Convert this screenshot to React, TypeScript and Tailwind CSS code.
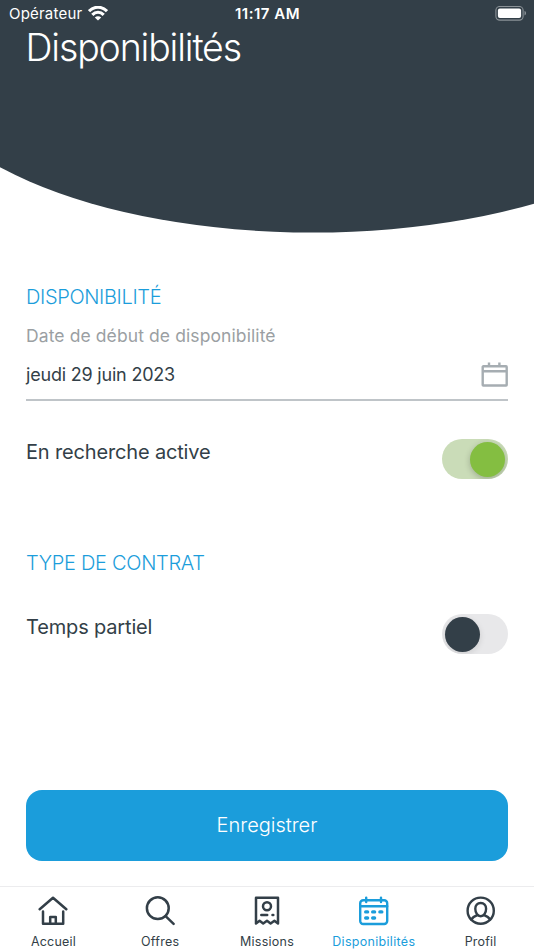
import React from "react";

function Toggle({ on }: { on: boolean }) {
  return (
    <button
      role="switch"
      aria-checked={on}
      className={`flex h-10 w-[66px] items-center overflow-hidden rounded-full px-[3px] ${
        on ? "justify-end bg-[#cadcb8]" : "justify-start bg-[#e8e8ea]"
      }`}
    >
      <span
        className={`block size-[35px] rounded-full ${
          on ? "bg-[#84be41] shadow-[0_2px_6px_rgba(0,0,0,0.22)]" : "bg-[#333f48] shadow-[0_2px_6px_rgba(0,0,0,0.12)]"
        }`}
      />
    </button>
  );
}

function HomeIcon() {
  return (
    <svg width="30" height="30" viewBox="0 0 30 30" fill="none" stroke="currentColor" strokeWidth="2.5" strokeLinecap="round" strokeLinejoin="round">
      <path d="M1.7 13.3 15 1.8l13.3 11.5M5 15.5v12.3h20.2V15.5M12.2 27.8v-6.7h5.6v6.7" />
    </svg>
  );
}

function SearchIcon() {
  return (
    <svg width="30" height="30" viewBox="0 0 30 30" fill="none" stroke="currentColor" strokeWidth="2.5" strokeLinecap="round">
      <circle cx="12.8" cy="12.2" r="10.9" />
      <path d="m20.6 20.2 8 7.6" />
    </svg>
  );
}

function MissionIcon() {
  return (
    <svg width="30" height="30" viewBox="0 0 30 30" fill="none" stroke="currentColor" strokeWidth="2.5" strokeLinecap="round" strokeLinejoin="round">
      <path d="M4 27.4V1.7h22v25.7l-3.6-2.6-3.8 2.7-3.6-2.7-3.8 2.7-3.6-2.7Z" />
      <circle cx="15" cy="10.3" r="4" />
      <path d="M9.3 18.9h5.9M20.5 18.9h.8" />
    </svg>
  );
}

function CalendarIcon() {
  return (
    <svg width="30" height="30" viewBox="0 0 30 30" fill="none" stroke="currentColor" strokeWidth="2.4" strokeLinecap="round" strokeLinejoin="round">
      <rect x="1.2" y="4.2" width="27" height="23.8" rx="3" />
      <path d="M1.2 10.2h27M7.2 1.6v4.4M22 1.6v4.4" />
      <path strokeWidth="3.4" d="M6.7 15.9h1.9M13.7 15.9h1.9M20.9 15.9h1.9M6.7 22h1.9M13.7 22h1.9" />
    </svg>
  );
}

function ProfileIcon() {
  return (
    <svg width="30" height="30" viewBox="0 0 30 30" fill="none" stroke="currentColor" strokeWidth="2.4" strokeLinecap="round" strokeLinejoin="round">
      <circle cx="14.7" cy="14.7" r="13.1" />
      <path d="M14.7 7c-3.3 0-5.4 2.4-5.4 5.8 0 4.2 2.3 7.4 5.4 7.4s5.4-3.2 5.4-7.4c0-3.4-2.1-5.8-5.4-5.8Z" />
      <path d="M5.3 23.6c1.3-2.3 3.3-3.4 6.1-4.4M24.1 23.6c-1.3-2.3-3.3-3.4-6.1-4.4" />
    </svg>
  );
}

const tabs = [
  { label: "Accueil", icon: <HomeIcon />, tracking: "tracking-[0.2px]" },
  { label: "Offres", icon: <SearchIcon />, tracking: "tracking-[0.3px]" },
  { label: "Missions", icon: <MissionIcon />, tracking: "tracking-[0.25px]" },
  { label: "Disponibilités", icon: <CalendarIcon />, active: true, tracking: "tracking-[0.3px]" },
  { label: "Profil", icon: <ProfileIcon />, tracking: "tracking-[0.2px]" },
];

export default function App() {
  return (
    <div className="relative flex h-[950px] w-[534px] flex-col overflow-hidden bg-white font-['Inter',sans-serif] text-[#333f48]">
      <svg className="absolute left-0 top-0" width="534" height="240" viewBox="0 0 534 240">
        <path d="M0 0H534V60H0Z" fill="#333f48" />
        <ellipse cx="313" cy="58" rx="401" ry="174.6" fill="#333f48" />
      </svg>

      <header className="relative h-[278px] text-white">
        <div className="grid h-[27px] grid-cols-3 items-center pl-[9px] pr-[8px]">
          <div className="flex items-center gap-[6px]">
            <span className="text-[15px] leading-[27px] tracking-[0.2px]">Opérateur</span>
            <svg width="20" height="15" viewBox="0 0 20 15" fill="none" stroke="white" strokeWidth="3.1">
              <path d="M1 5.3C6-.1 14-.1 19 5.3M4.3 8.9c3.3-3.5 8.1-3.5 11.4 0" />
              <path d="M10 14.6 6.8 11.4c1.8-1.7 4.6-1.7 6.4 0Z" fill="white" stroke="none" />
            </svg>
          </div>
          <span className="text-center text-[15px] font-semibold leading-[27px] tracking-[0.5px]">11:17 AM</span>
          <svg className="justify-self-end" width="31" height="15" viewBox="0 0 31 15">
            <rect x=".9" y=".5" width="27.2" height="13.6" rx="3.8" fill="none" stroke="#8b9297" strokeWidth="1.1" />
            <rect x="2.9" y="2.5" width="23.2" height="9.6" rx="2" fill="white" />
            <path d="M29.5 5.1c2 .6 2 3.8 0 4.4Z" fill="#8b9297" />
          </svg>
        </div>
        <h1 className="pl-[25.5px] text-[37.5px] font-light leading-[42px] tracking-[-1.15px]">Disponibilités</h1>
      </header>

      <main className="flex flex-1 flex-col px-[26px]">
        <h2 className="h-[38px] text-[20px] font-light leading-[38px] tracking-[-0.35px] text-[#1b9ddb]">DISPONIBILITÉ</h2>
        <p className="h-[39px] text-[17.5px] leading-[39px] tracking-[0.1px] text-[#9b9fa3]">Date de début de disponibilité</p>
        <div className="flex h-[46px] justify-between border-b-2 border-[#bfc4c8]">
          <span className="text-[18px] leading-[39px] tracking-[-0.2px]">jeudi 29 juin 2023</span>
          <svg className="mt-[7px]" width="27" height="26" viewBox="0 0 27 26" fill="none" stroke="#a6adb2" strokeWidth="2.4">
            <rect x="1.7" y="4.3" width="24" height="19.2" rx=".6" />
            <path d="M1.7 9.3h24M8 .6v4M18.4 .6v4" />
          </svg>
        </div>
        <div className="mt-[38px] flex h-10 items-start justify-between">
          <span className="text-[20px] leading-[26px] tracking-[-0.16px]">En recherche active</span>
          <Toggle on />
        </div>
        <h2 className="mt-[70px] h-[28px] text-[20px] font-light leading-[28px] tracking-[-0.3px] text-[#1b9ddb]">TYPE DE CONTRAT</h2>
        <div className="mt-[37px] flex h-10 items-start justify-between">
          <span className="text-[20px] leading-[26px] tracking-[-0.16px]">Temps partiel</span>
          <Toggle on={false} />
        </div>
        <button className="mt-[136px] h-[71px] w-full rounded-[16px] bg-[#1b9ddb] pb-[2px] text-[20px] font-light text-white">
          Enregistrer
        </button>
      </main>

      <nav className="grid h-[64px] shrink-0 grid-cols-5 border-t border-[#ececee] bg-white">
        {tabs.map((t) => (
          <a key={t.label} className={`flex flex-col items-center pt-[9px] ${t.active ? "text-[#1b9ddb]" : ""}`}>
            {t.icon}
            <span className={`mt-[8px] whitespace-nowrap text-[12.5px] leading-[16px] ${t.tracking}`}>{t.label}</span>
          </a>
        ))}
      </nav>
    </div>
  );
}
